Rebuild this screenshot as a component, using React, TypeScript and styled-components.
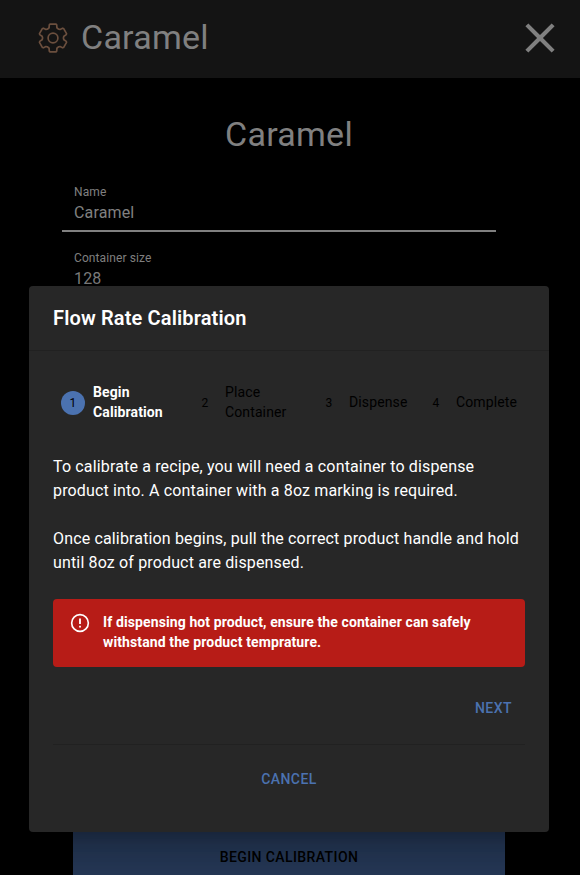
import React from 'react';
import styled, { createGlobalStyle } from 'styled-components';

const GlobalStyle = createGlobalStyle`
  * { box-sizing: border-box; }
  html, body { margin: 0; background: #000; overflow: hidden; }
  body { font-family: Roboto, sans-serif; color: #fff; height: 875px; }
  #root { height: 875px; }
`;

const Screen = styled.main`
  position: relative;
  width: 580px;
  height: 875px;
  overflow: hidden;
  background: #000;
  display: flex;
  flex-direction: column;
`;

const TopBar = styled.header`
  height: 78px;
  flex: none;
  background: #141414;
  display: flex;
  align-items: center;
  padding: 0 15px 2px 37px;
`;

const BarTitle = styled.h1`
  margin: 0 auto 2px 12px;
  font-size: 34px;
  line-height: 42px;
  font-weight: 400;
  letter-spacing: 0.25px;
  color: #808080;
`;

const IconButton = styled.button`
  display: flex;
  border: 0;
  padding: 0;
  background: none;
  color: #808080;
`;

const PageTitle = styled.h2`
  margin: 35px 2px 0 0;
  text-align: center;
  font-size: 34px;
  line-height: 42px;
  font-weight: 400;
  letter-spacing: 0.25px;
  color: #808080;
`;

const Fields = styled.section`
  margin: 23px 84px 0 62px;
  display: flex;
  flex-direction: column;
  gap: 12px;
`;

const Field = styled.div`
  height: 54px;
  padding: 7px 12px 0;
  border-bottom: 2px solid #808080;
  color: #808080;
`;

const FieldLabel = styled.div`
  font-size: 12px;
  line-height: 14px;
  letter-spacing: 0.1px;
`;

const FieldValue = styled.div`
  font-size: 16px;
  line-height: 19px;
  margin-top: 4px;
  letter-spacing: 0.15px;
`;

const PageButton = styled.button`
  margin: auto 75px -8px 73px;
  height: 52px;
  flex: none;
  border: 0;
  background: #263958;
  color: #000;
  font: 500 14px/24px Roboto, sans-serif;
  letter-spacing: 0.4px;
`;

const Dialog = styled.section`
  position: absolute;
  left: 29px;
  top: 286px;
  width: 520px;
  height: 546px;
  border-radius: 4px;
  background: #272727;
  box-shadow:
    0 11px 15px -7px rgba(0, 0, 0, 0.2),
    0 24px 38px 3px rgba(0, 0, 0, 0.14),
    0 9px 46px 8px rgba(0, 0, 0, 0.12);
`;

const DialogTitle = styled.h3`
  margin: 0;
  height: 65px;
  padding: 16px 24px;
  border-bottom: 1px solid #212121;
  font-size: 20px;
  line-height: 32px;
  font-weight: 600;
  letter-spacing: 0.14px;
`;

const DialogBody = styled.div`
  padding: 20px 24px 0;
`;

const Stepper = styled.ol`
  margin: 0;
  padding: 0 8px;
  list-style: none;
  height: 64px;
  display: grid;
  grid-template-columns: 132px 124px 107px auto;
  align-items: center;
`;

const Step = styled.li<{ $active?: boolean }>`
  display: flex;
  align-items: center;
  gap: 8px;
  font-size: 14px;
  line-height: 20px;
  letter-spacing: 0.12px;
  color: ${p => (p.$active ? '#fff' : '#000')};
  font-weight: ${p => (p.$active ? 700 : 400)};
`;

const StepNumber = styled.span<{ $active?: boolean }>`
  width: 24px;
  height: 24px;
  flex: none;
  border-radius: 50%;
  display: flex;
  align-items: center;
  justify-content: center;
  font-size: 12px;
  font-weight: 400;
  color: #000;
  background: ${p => (p.$active ? '#4b72b0' : 'transparent')};
`;

const StepLabel = styled.span`
  white-space: pre-line;
  padding-bottom: 2px;
`;

const Copy = styled.p`
  margin: 0 0 24px;
  font-size: 16px;
  line-height: 24px;
  letter-spacing: 0.15px;
`;

const CopyGroup = styled.div`
  margin-top: 20px;
`;

const Warning = styled.div`
  height: 68px;
  border-radius: 4px;
  background: #b71c17;
  padding: 13px 16px;
  display: flex;
  gap: 12px;
  font-size: 14px;
  line-height: 20px;
  font-weight: 700;
  letter-spacing: 0.11px;
`;

const WarningIcon = styled.svg`
  flex: none;
`;

const NextRow = styled.div`
  height: 78px;
  padding: 5px 13px 0;
  display: flex;
  justify-content: flex-end;
  align-items: center;
  border-bottom: 1px solid #212121;
`;

const CancelRow = styled.div`
  height: 68px;
  display: flex;
  justify-content: center;
  align-items: center;
`;

const TextButton = styled.button`
  border: 0;
  padding: 0;
  background: none;
  color: #4b72b0;
  font: 500 14px/24px Roboto, sans-serif;
  letter-spacing: 0.45px;
`;

const steps = ['Begin\nCalibration', 'Place\nContainer', 'Dispense', 'Complete'];

// One tooth of the gear, pointing up; it is repeated every 60 degrees.
const toothPoints = [[-4.7, -9.4], [-3.9, -10.4], [-3.7, -13.2], [-3, -13.9], [3, -13.9], [3.7, -13.2], [3.9, -10.4], [4.7, -9.4]];

const gearPath =
  'M' +
  [0, 60, 120, 180, 240, 300]
    .map(deg => {
      const a = (deg * Math.PI) / 180;
      return toothPoints
        .map(([x, y]) => `${(x * Math.cos(a) - y * Math.sin(a)).toFixed(2)} ${(x * Math.sin(a) + y * Math.cos(a)).toFixed(2)}`)
        .join('L');
    })
    .join('L') +
  'Z';

const GearIcon = () => (
  <svg width="32" height="32" viewBox="-16 -16 32 32" fill="none" stroke="#6b4f3e" strokeWidth="1.7" strokeLinejoin="round">
    <path d={gearPath} />
    <circle r="4.9" />
  </svg>
);

export default function App() {
  return (
    <>
      <GlobalStyle />
      <Screen>
        <TopBar>
          <GearIcon />
          <BarTitle>Caramel</BarTitle>
          <IconButton aria-label="Close">
            <svg width="50" height="50" viewBox="0 0 24 24" fill="currentColor">
              <path d="M19 6.41 17.59 5 12 10.59 6.41 5 5 6.41 10.59 12 5 17.59 6.41 19 12 13.41 17.59 19 19 17.59 13.41 12z" />
            </svg>
          </IconButton>
        </TopBar>
        <PageTitle>Caramel</PageTitle>
        <Fields>
          <Field>
            <FieldLabel>Name</FieldLabel>
            <FieldValue>Caramel</FieldValue>
          </Field>
          <Field>
            <FieldLabel>Container size</FieldLabel>
            <FieldValue>128</FieldValue>
          </Field>
        </Fields>
        <PageButton>BEGIN CALIBRATION</PageButton>
        <Dialog role="dialog">
          <DialogTitle>Flow Rate Calibration</DialogTitle>
          <DialogBody>
            <Stepper>
              {steps.map((label, i) => (
                <Step key={label} $active={i === 0}>
                  <StepNumber $active={i === 0}>{i + 1}</StepNumber>
                  <StepLabel>{label}</StepLabel>
                </Step>
              ))}
            </Stepper>
            <CopyGroup>
              <Copy>To calibrate a recipe, you will need a container to dispense product into. A container with a 8oz marking is required.</Copy>
              <Copy>Once calibration begins, pull the correct product handle and hold until 8oz of product are dispensed.</Copy>
            </CopyGroup>
            <Warning>
              <WarningIcon width="22" height="22" viewBox="0 0 24 24" fill="#fff">
                <path d="M11 15h2v2h-2zm0-8h2v6h-2zm1-5a10 10 0 1 0 0 20 10 10 0 0 0 0-20zm0 18.2a8.2 8.2 0 1 1 0-16.4 8.2 8.2 0 0 1 0 16.4z" />
              </WarningIcon>
              <span>If dispensing hot product, ensure the container can safely withstand the product temprature.</span>
            </Warning>
            <NextRow><TextButton>NEXT</TextButton></NextRow>
            <CancelRow><TextButton>CANCEL</TextButton></CancelRow>
          </DialogBody>
        </Dialog>
      </Screen>
    </>
  );
}
